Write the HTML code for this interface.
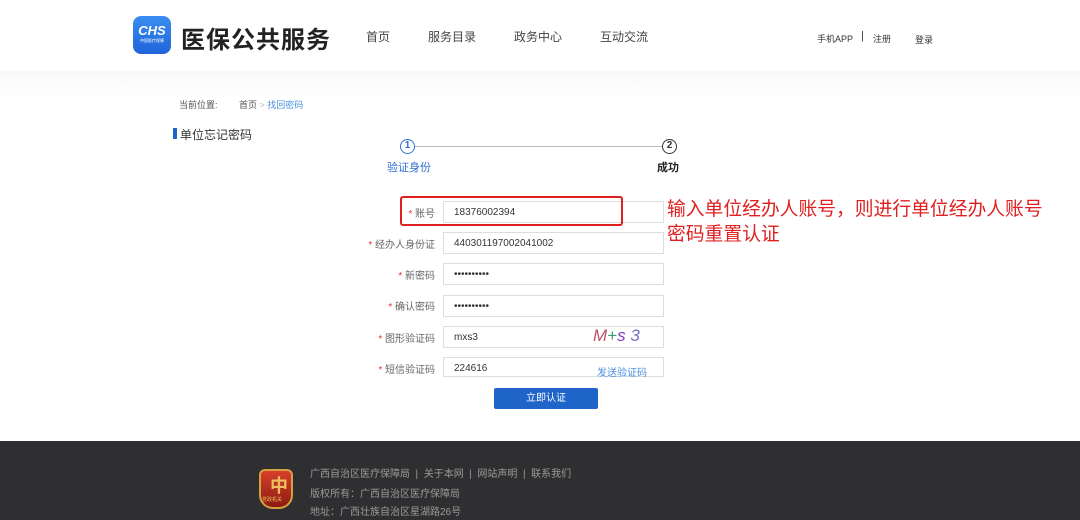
<!DOCTYPE html>
<html><head><meta charset="utf-8"><style>
*{margin:0;padding:0;box-sizing:border-box}
body{width:1080px;height:520px;overflow:hidden;background:#fff;font-family:"Liberation Sans","Noto Sans CJK SC",sans-serif;position:relative;color:#333}
.a{position:absolute;white-space:nowrap}
.hdr{position:absolute;left:0;top:0;width:1080px;height:71px;background:#fff;box-shadow:0 2px 6px rgba(0,0,0,.05)}
.grad{position:absolute;left:0;top:71px;width:1080px;height:25px;background:linear-gradient(#f8f8f8,#fff)}
.nav{font-size:12px;color:#444;top:28px}
.lbl{font-size:10px;color:#666;text-align:right;width:100px;left:335px}
.lbl b{color:#e33;font-weight:normal}
.inp{left:443px;width:221px;height:22px;border:1px solid #ddd;background:#fff;font-size:10px;color:#333;padding:5px 0 0 10px}
.foot{position:absolute;left:0;top:441px;width:1080px;height:79px;background:#2f2f31}
.ft{font-size:10px;color:#9a9a9a}
</style></head><body>
<div class="hdr"></div>
<div class="grad"></div>
<div class="a" style="left:133px;top:16px;width:38px;height:38px;border-radius:8px;background:linear-gradient(#3a8ef0,#1f64d8)"></div>
<div class="a" style="left:133px;top:23px;width:38px;text-align:center;color:#fff;font-weight:bold;font-style:italic;font-size:13px">CHS</div>
<div class="a" style="left:133px;top:38px;width:38px;text-align:center;color:#fff;font-size:4px">中国医疗保障</div>
<div class="a" style="left:181px;top:20px;font-size:24px;font-weight:bold;color:#222;letter-spacing:1px">医保公共服务</div>
<div class="a nav" style="left:366px">首页</div>
<div class="a nav" style="left:428px">服务目录</div>
<div class="a nav" style="left:514px">政务中心</div>
<div class="a nav" style="left:600px">互动交流</div>
<div class="a" style="left:817px;top:32px;font-size:9px;color:#333">手机APP</div>
<div class="a" style="left:861px;top:30px;font-size:11px;color:#333">|</div>
<div class="a" style="left:873px;top:32px;font-size:9px;color:#333">注册</div>
<div class="a" style="left:915px;top:33px;font-size:9px;color:#333">登录</div>

<div class="a" style="left:179px;top:98px;font-size:9px;color:#555">当前位置:</div>
<div class="a" style="left:239px;top:98px;font-size:9px;color:#555">首页 <span style="color:#bbb">&gt;</span> <span style="color:#4a90e2">找回密码</span></div>
<div class="a" style="left:173px;top:128px;width:4px;height:11px;background:#1f64c8"></div>
<div class="a" style="left:180px;top:126px;font-size:12px;color:#333">单位忘记密码</div>

<div class="a" style="left:415px;top:146px;width:248px;height:1px;background:#bbb"></div>
<div class="a" style="left:400px;top:139px;width:15px;height:15px;border:1.5px solid #2f6fd0;border-radius:50%;background:#fff;font-size:10px;text-align:center;line-height:12px;color:#2f6fd0;font-weight:bold">1</div>
<div class="a" style="left:662px;top:139px;width:15px;height:15px;border:1.5px solid #333;border-radius:50%;background:#fff;font-size:10px;text-align:center;line-height:12px;color:#333;font-weight:bold">2</div>
<div class="a" style="left:387px;top:159px;font-size:11px;color:#2f6fd0">验证身份</div>
<div class="a" style="left:657px;top:159px;font-size:11px;color:#222;font-weight:bold">成功</div>

<div class="a lbl" style="top:205px"><b>* </b>账号</div>
<div class="a inp" style="top:201px">18376002394</div>
<div class="a lbl" style="top:236px"><b>* </b>经办人身份证</div>
<div class="a inp" style="top:232px">440301197002041002</div>
<div class="a lbl" style="top:267px"><b>* </b>新密码</div>
<div class="a inp" style="top:263px">••••••••••</div>
<div class="a lbl" style="top:298px"><b>* </b>确认密码</div>
<div class="a inp" style="top:295px">••••••••••</div>
<div class="a lbl" style="top:330px"><b>* </b>图形验证码</div>
<div class="a inp" style="top:326px">mxs3</div>
<div class="a" style="left:593px;top:326px;font-size:17px;font-style:italic"><span style="color:#c0506a">M</span><span style="color:#3a9a70">+</span><span style="color:#8040c0">s</span> <span style="color:#7070c0">3</span></div>
<div class="a lbl" style="top:361px"><b>* </b>短信验证码</div>
<div class="a inp" style="top:357px;height:20px">224616</div>
<div class="a" style="left:597px;top:364px;font-size:10px;color:#4a90e2">发送验证码</div>
<div class="a" style="left:494px;top:388px;width:104px;height:21px;background:#1f64c8;border-radius:2px;color:#fff;font-size:10px;text-align:center;line-height:21px">立即认证</div>

<div class="a" style="left:400px;top:196px;width:223px;height:30px;border:2px solid #e02020;border-radius:3px"></div>
<div class="a" style="left:667px;top:196px;font-size:18.8px;color:#e02020;line-height:25px">输入单位经办人账号，则进行单位经办人账号<br>密码重置认证</div>

<div class="foot"></div>
<div class="a" style="left:259px;top:469px;width:34px;height:40px;background:linear-gradient(#d8402a,#8a1a10);border-radius:6px 6px 14px 14px;border:2px solid #d4a040"></div>
<div class="a" style="left:270px;top:472px;font-size:18px;color:#f0c060;font-weight:bold">中</div>
<div class="a" style="left:262px;top:496px;font-size:5px;color:#f0c060">党政机关</div>
<div class="a ft" style="left:310px;top:465px">广西自治区医疗保障局 &nbsp;|&nbsp; 关于本网 &nbsp;|&nbsp; 网站声明 &nbsp;|&nbsp; 联系我们</div>
<div class="a ft" style="left:310px;top:485px">版权所有：广西自治区医疗保障局</div>
<div class="a ft" style="left:310px;top:503px">地址：广西壮族自治区星湖路26号</div>
</body></html>
